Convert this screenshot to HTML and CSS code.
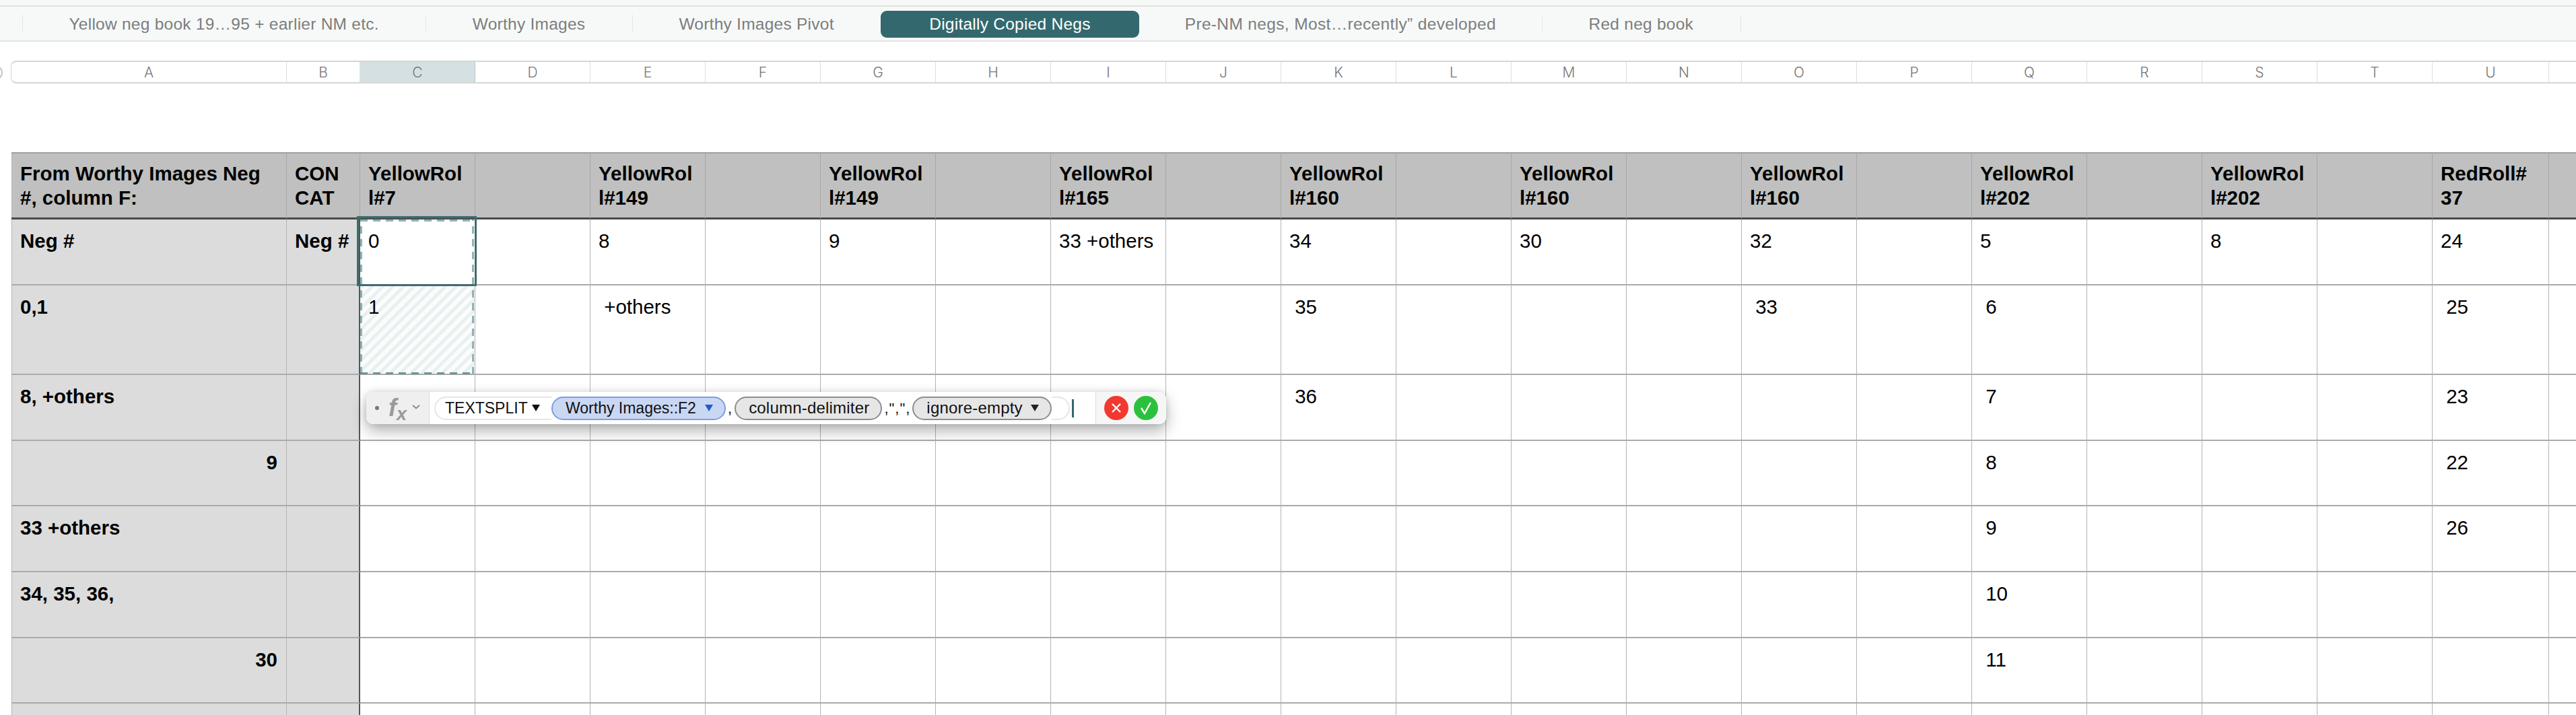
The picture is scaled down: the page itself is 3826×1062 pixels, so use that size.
FILE: index.html
```html
<!DOCTYPE html>
<html lang="en">
<head>
  <meta charset="UTF-8">
  <title>Digitally Copied Negs</title>
  <link rel="stylesheet" href="styles.css">
</head>
<body>
  <nav class="tabs">
    <div class="tab">Yellow neg book 19…95 + earlier NM etc.</div>
    <div class="tab">Worthy Images</div>
    <div class="tab">Worthy Images Pivot</div>
    <div class="tab active">Digitally Copied Negs</div>
    <div class="tab no-line">Pre-NM negs, Most…recently” developed</div>
    <div class="tab">Red neg book</div>
    <div class="tab-end"></div>
  </nav>

  <div class="columns">
    <div class="col">A</div><div class="col">B</div><div class="col on">C</div><div class="col">D</div><div class="col">E</div><div class="col">F</div><div class="col">G</div><div class="col">H</div><div class="col">I</div><div class="col">J</div><div class="col">K</div><div class="col">L</div><div class="col">M</div><div class="col">N</div><div class="col">O</div><div class="col">P</div><div class="col">Q</div><div class="col">R</div><div class="col">S</div><div class="col">T</div><div class="col">U</div><div class="col"></div>
  </div>

  <div class="sheet">
    <div class="row head">
      <div class="c">From Worthy Images Neg #, column F:</div><div class="c">CONCAT</div><div class="c">YellowRoll#7</div><div class="c"></div><div class="c">YellowRoll#149</div><div class="c"></div><div class="c">YellowRoll#149</div><div class="c"></div><div class="c">YellowRoll#165</div><div class="c"></div><div class="c">YellowRoll#160</div><div class="c"></div><div class="c">YellowRoll#160</div><div class="c"></div><div class="c">YellowRoll#160</div><div class="c"></div><div class="c">YellowRoll#202</div><div class="c"></div><div class="c">YellowRoll#202</div><div class="c"></div><div class="c">RedRoll#<br>37</div><div class="c"></div>
    </div>
    <div class="row">
      <div class="c key">Neg #</div><div class="c key edge">Neg #</div><div class="c picked">0</div><div class="c"></div><div class="c">8</div><div class="c"></div><div class="c">9</div><div class="c"></div><div class="c">33 +others</div><div class="c"></div><div class="c">34</div><div class="c"></div><div class="c">30</div><div class="c"></div><div class="c">32</div><div class="c"></div><div class="c">5</div><div class="c"></div><div class="c">8</div><div class="c"></div><div class="c">24</div><div class="c"></div>
    </div>
    <div class="row">
      <div class="c key">0,1</div><div class="c key edge"></div><div class="c hatch">1</div><div class="c"></div><div class="c"> +others</div><div class="c"></div><div class="c"></div><div class="c"></div><div class="c"></div><div class="c"></div><div class="c"> 35</div><div class="c"></div><div class="c"></div><div class="c"></div><div class="c"> 33</div><div class="c"></div><div class="c"> 6</div><div class="c"></div><div class="c"></div><div class="c"></div><div class="c"> 25</div><div class="c"></div>
    </div>
    <div class="row">
      <div class="c key">8, +others</div><div class="c key edge"></div><div class="c"></div><div class="c"></div><div class="c"></div><div class="c"></div><div class="c"></div><div class="c"></div><div class="c"></div><div class="c"></div><div class="c"> 36</div><div class="c"></div><div class="c"></div><div class="c"></div><div class="c"></div><div class="c"></div><div class="c"> 7</div><div class="c"></div><div class="c"></div><div class="c"></div><div class="c"> 23</div><div class="c"></div>
    </div>
    <div class="row">
      <div class="c key num">9</div><div class="c key edge"></div><div class="c"></div><div class="c"></div><div class="c"></div><div class="c"></div><div class="c"></div><div class="c"></div><div class="c"></div><div class="c"></div><div class="c"></div><div class="c"></div><div class="c"></div><div class="c"></div><div class="c"></div><div class="c"></div><div class="c"> 8</div><div class="c"></div><div class="c"></div><div class="c"></div><div class="c"> 22</div><div class="c"></div>
    </div>
    <div class="row">
      <div class="c key">33 +others</div><div class="c key edge"></div><div class="c"></div><div class="c"></div><div class="c"></div><div class="c"></div><div class="c"></div><div class="c"></div><div class="c"></div><div class="c"></div><div class="c"></div><div class="c"></div><div class="c"></div><div class="c"></div><div class="c"></div><div class="c"></div><div class="c"> 9</div><div class="c"></div><div class="c"></div><div class="c"></div><div class="c"> 26</div><div class="c"></div>
    </div>
    <div class="row">
      <div class="c key">34, 35, 36,</div><div class="c key edge"></div><div class="c"></div><div class="c"></div><div class="c"></div><div class="c"></div><div class="c"></div><div class="c"></div><div class="c"></div><div class="c"></div><div class="c"></div><div class="c"></div><div class="c"></div><div class="c"></div><div class="c"></div><div class="c"></div><div class="c"> 10</div><div class="c"></div><div class="c"></div><div class="c"></div><div class="c"></div><div class="c"></div>
    </div>
    <div class="row">
      <div class="c key num">30</div><div class="c key edge"></div><div class="c"></div><div class="c"></div><div class="c"></div><div class="c"></div><div class="c"></div><div class="c"></div><div class="c"></div><div class="c"></div><div class="c"></div><div class="c"></div><div class="c"></div><div class="c"></div><div class="c"></div><div class="c"></div><div class="c"> 11</div><div class="c"></div><div class="c"></div><div class="c"></div><div class="c"></div><div class="c"></div>
    </div>
    <div class="row">
      <div class="c key"></div><div class="c key edge"></div><div class="c"></div><div class="c"></div><div class="c"></div><div class="c"></div><div class="c"></div><div class="c"></div><div class="c"></div><div class="c"></div><div class="c"></div><div class="c"></div><div class="c"></div><div class="c"></div><div class="c"></div><div class="c"></div><div class="c"></div><div class="c"></div><div class="c"></div><div class="c"></div><div class="c"></div><div class="c"></div>
    </div>
  </div>

  <!-- formula editor floats over the sheet -->
  <div class="formula">
    <div class="fx-box">
      <span class="fx-dot"></span>
      <span class="fx">f<sub>x</sub></span>
      <svg class="fx-chev" width="12" height="7" viewBox="0 0 12 7"><path d="M1 1l5 4.5L11 1" fill="none" stroke="#8c8c8c" stroke-width="2"/></svg>
    </div>
    <div class="tokens">
      <span class="pill fn">TEXTSPLIT<svg class="tri" width="12" height="10" viewBox="0 0 12 10"><path d="M0 0h12L6 10z" fill="#111"/></svg></span>
      <span class="pill ref">Worthy Images::F2<svg class="tri" width="12" height="10" viewBox="0 0 12 10"><path d="M0 0h12L6 10z" fill="#1f5cc8"/></svg></span>
      <span class="sep">,</span>
      <span class="pill arg">column-delimiter</span>
      <span class="sep">,",",</span>
      <span class="pill arg">ignore-empty<svg class="tri" width="12" height="10" viewBox="0 0 12 10"><path d="M0 0h12L6 10z" fill="#222"/></svg></span>
      <span class="ghost"></span>
      <span class="caret"></span>
    </div>
    <div class="actions">
      <span class="round red"><svg width="18" height="18" viewBox="0 0 18 18"><path d="M3 3l12 12M15 3L3 15" stroke="#fff" stroke-width="2.4" fill="none"/></svg></span>
      <span class="round green"><svg width="20" height="20" viewBox="0 0 20 20"><path d="M3 10l5 8L17 2" stroke="#fff" stroke-width="2.4" fill="none"/></svg></span>
    </div>
  </div>
</body>
</html>
```
FILE: styles.css
```css
* {
  margin: 0;
  padding: 0;
  box-sizing: border-box;
}

:root {
  --tracks: 409px 109px repeat(18, 171px) 173px 1fr;
}

body {
  position: relative;
  width: 3826px;
  height: 1062px;
  overflow: hidden;
  background-color: white;
  font-family: "Liberation Sans", Arial, sans-serif;
}

/* sheet tabs */
.tabs {
  display: flex;
  align-items: center;
  height: 62px;
  padding-left: 33px;
  padding-top: 10px;
  background-color: #f7f9f8;
  border-bottom: 2px solid #e0e4e3;
  position: relative;
}

.tabs::before {
  content: '';
  position: absolute;
  left: 0;
  right: 0;
  top: 8px;
  height: 2px;
  background-color: #dfe3e2;
}

.tab {
  display: flex;
  align-items: center;
  height: 40px;
  padding: 0 69.5px;
  color: #7b7e7d;
  font-size: 24.5px;
  letter-spacing: 0.25px;
  white-space: nowrap;
  position: relative;
  top: 1px;
}

.tab::before {
  content: '';
  position: absolute;
  left: 0;
  top: 6px;
  width: 1px;
  height: 25px;
  background-color: #e3e6e5;
}

.tab.active {
  padding: 0 72px;
  background-color: #33696e;
  color: white;
  border-radius: 9px;
}

.tab.active::before,
.tab.no-line::before {
  display: none;
}

.tab.no-line {
  padding: 0 68px;
  letter-spacing: 0.35px;
}

.tab-end {
  width: 1px;
  height: 25px;
  background-color: #e3e6e5;
}

/* column letters */
.columns {
  display: grid;
  grid-template-columns: var(--tracks);
  height: 34px;
  margin-top: 28px;
  margin-left: 17px;
  border-top: 2px solid #d6d6d6;
  border-bottom: 2px solid #d6d6d6;
  border-top-left-radius: 8px;
  border-bottom-left-radius: 8px;
  box-shadow: -1px 0 0 #d6d6d6;
  position: relative;
}

.columns::before {
  content: '';
  position: absolute;
  left: -35px;
  top: 5px;
  width: 18px;
  height: 18px;
  border-radius: 50%;
  border: 2px solid #c4c4c4;
}

.col {
  display: flex;
  align-items: center;
  justify-content: center;
  border-right: 1px solid #dedede;
  color: #777;
  font-family: Inter, "Liberation Sans", sans-serif;
  font-weight: 300;
  font-size: 21px;
}

.col.on {
  background-color: #d5e0e3;
  border-right-color: #b9c6c9;
}

.col:last-child {
  border-right: none;
}

/* the table */
.sheet {
  display: grid;
  grid-template-columns: var(--tracks);
  grid-template-rows: 100px 98px 133px 98px 97px 98px 98px 97px 60px;
  margin-top: 102px;
  margin-left: 17px;
}

.row {
  display: contents;
}

.c {
  padding: 14px 13px 0 12px;
  border-right: 1px solid #b4b4b4;
  border-bottom: 2px solid #aaaaaa;
  font-size: 29.5px;
  line-height: 36px;
  color: #000;
  white-space: pre-wrap;
  overflow-wrap: anywhere;
}

.c:first-child {
  padding-left: 13px;
}

.c:last-child {
  border-right: none;
}

.head .c {
  display: flex;
  align-items: center;
  padding: 0 15px 0 12px;
  background-color: #bfc0bf;
  border-top: 2px solid #a0a0a0;
  border-right-color: #a6a7a6;
  border-bottom: 3px solid #4a4a4a;
  font-weight: bold;
}

.head .c:first-child {
  padding-left: 13px;
}

.head .c:first-child,
.key:first-child {
  box-shadow: inset 1px 0 0 #b4b4b4;
}

.key {
  background-color: #dcdcdc;
  font-weight: bold;
}

.key.edge {
  border-right: 2px solid #555;
}

.key.num {
  text-align: right;
}

/* selected cell and its spill range */
.picked {
  position: relative;
}

.picked::before {
  content: '';
  position: absolute;
  left: 0;
  right: 1px;
  top: 0;
  height: 230px;
  background:
    repeating-linear-gradient(90deg, #8fb2b3 0 11px, transparent 11px 19px) top / 100% 3px no-repeat,
    repeating-linear-gradient(90deg, #6f9596 0 11px, transparent 11px 19px) bottom / 100% 3px no-repeat,
    repeating-linear-gradient(0deg, #8fb2b3 0 11px, transparent 11px 19px) left / 3px 100% no-repeat,
    repeating-linear-gradient(0deg, #8fb2b3 0 11px, transparent 11px 19px) right / 3px 100% no-repeat;
  z-index: 2;
}

.picked::after {
  content: '';
  position: absolute;
  left: -5px;
  right: -3px;
  top: -5px;
  bottom: -3px;
  border: 3px solid #3f6b70;
  z-index: 3;
}

.hatch {
  background: repeating-linear-gradient(135deg, #e9f0f0 0 5px, #fbfcfc 5px 11px);
}

/* formula bar */
.formula {
  position: absolute;
  left: 544px;
  top: 582px;
  width: 1188px;
  height: 48px;
  display: flex;
  align-items: stretch;
  background-color: white;
  border-radius: 10px;
  box-shadow: 0 10px 22px rgba(0,0,0,0.3), 0 0 8px rgba(0,0,0,0.12);
  z-index: 5;
}

.fx-box {
  width: 94px;
  display: flex;
  align-items: center;
  padding-left: 13px;
  background-color: #efefef;
  border-right: 1px solid #dcdcdc;
  border-radius: 10px 0 0 10px;
}

.fx-dot {
  width: 6px;
  height: 6px;
  border-radius: 50%;
  background-color: #777;
}

.fx {
  margin-left: 14px;
  color: #9a9a9a;
  font-family: "Liberation Sans", sans-serif;
  font-style: italic;
  font-weight: bold;
  font-size: 36px;
  line-height: 36px;
  width: 29px;
}

.fx sub {
  font-size: 27px;
  line-height: 0;
  vertical-align: -6px;
}

.fx-chev {
  margin-left: 6px;
  margin-bottom: 4px;
}

.tokens {
  flex: 1;
  display: flex;
  align-items: center;
  padding-left: 7px;
  font-size: 23px;
  color: #111;
  white-space: nowrap;
}

.pill {
  display: flex;
  align-items: center;
  height: 35px;
  border-radius: 18px;
}

.pill.fn {
  width: 174px;
  padding-left: 14px;
  font-size: 23px;
  border: 2px solid #e6e6e6;
  border-right: none;
  border-radius: 18px 0 0 18px;
}

.pill.ref {
  width: 259px;
  padding-left: 19px;
  background-color: #c9d7f3;
  border: 2px solid #7e9fdc;
}

.pill.ref .tri {
  margin-left: 13px;
}

.pill.fn .tri {
  margin-left: 6px;
}

.sep {
  font-size: 22px;
  padding: 2px 3px 0;
  letter-spacing: 1px;
}

.pill.arg {
  padding: 0 17px 0 19px;
  font-size: 24px;
  letter-spacing: 0.2px;
  background-color: #e6e6e6;
  border: 2px solid #8d8d8d;
}

.pill.arg .tri {
  margin-left: 12px;
}

.ghost {
  width: 27px;
  height: 35px;
  border: 2px solid #e6e6e6;
  border-left: none;
  border-radius: 0 18px 18px 0;
}

.caret {
  width: 3px;
  height: 27px;
  margin-left: 3px;
  background-color: #33696e;
}

.actions {
  width: 105px;
  display: flex;
  align-items: center;
  gap: 8px;
  padding-left: 12px;
  background-color: #f6f6f6;
  border-left: 1px solid #dcdcdc;
  border-radius: 0 10px 10px 0;
}

.round {
  width: 36px;
  height: 36px;
  border-radius: 50%;
  display: flex;
  align-items: center;
  justify-content: center;
}

.round.red {
  background-color: #f2392f;
}

.round.green {
  background-color: #2cc13d;
}
```
